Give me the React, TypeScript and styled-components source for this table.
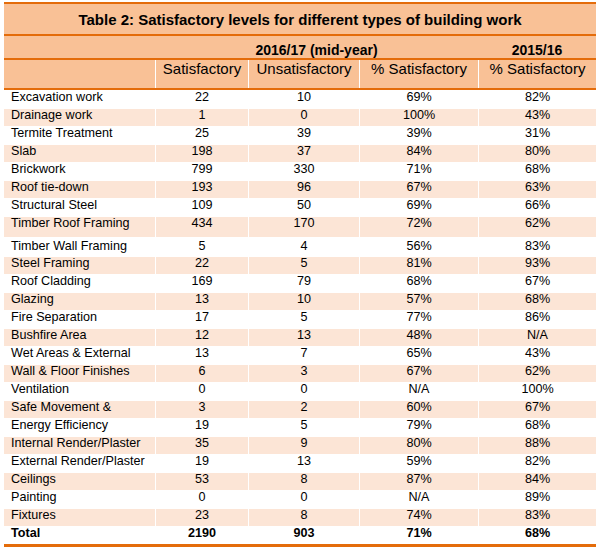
import React from 'react';
import styled, { createGlobalStyle } from 'styled-components';

const ORANGE = '#E46C0A';
const PEACH = '#F9C196';
const STRIPE = '#FCE5D6';
const COLS = '151px 93px 111px 119px 118px';

const GlobalStyle = createGlobalStyle`
  html, body { margin: 0; padding: 0; background: #fff; }
  body { font-family: "Liberation Sans", Arial, sans-serif; color: #000; }
`;

const Page = styled.div`
  padding: 2px 6px 0 4px;
`;

const Table = styled.div`
  width: 592px;
  border-top: 2px solid ${ORANGE};
  border-bottom: 3px solid ${ORANGE};
`;

const TitleRow = styled.div`
  height: 30px;
  background: ${PEACH};
  border-bottom: 2px solid ${ORANGE};
  display: flex;
  align-items: center;
  justify-content: center;
  font-weight: bold;
  font-size: 15px;
`;

const YearRow = styled.div`
  display: grid;
  grid-template-columns: ${COLS};
  height: 22px;
  background: ${PEACH};
  border-bottom: 2px solid ${ORANGE};
  font-weight: bold;
  font-size: 14px;
`;

const YearCell = styled.div<{ $col: number; $span?: number }>`
  grid-column: ${(p) => p.$col} / span ${(p) => p.$span ?? 1};
  align-self: end;
  text-align: center;
`;

const HeaderRow = styled.div`
  display: grid;
  grid-template-columns: ${COLS};
  height: 28px;
  background: ${PEACH};
  border-bottom: 2px solid ${ORANGE};
  font-size: 15px;
`;

const HeadCell = styled.div<{ $first?: boolean }>`
  text-align: center;
  line-height: 17px;
  border-left: ${(p) => (p.$first ? 'none' : '1px solid #fff')};
`;

const Row = styled.div<{ $stripe?: boolean; $h?: number; $pt?: number; $bold?: boolean }>`
  display: grid;
  grid-template-columns: ${COLS};
  box-sizing: content-box;
  border-top: 1px solid #fff;
  height: ${(p) => p.$h ?? 17}px;
  padding-top: ${(p) => p.$pt ?? 0}px;
  background: ${(p) => (p.$stripe ? STRIPE : '#fff')};
  font-size: 12.6px;
  line-height: 13px;
  font-weight: ${(p) => (p.$bold ? 'bold' : 'normal')};
`;

const NameCell = styled.div`
  padding-left: 7px;
  padding-right: 6px;
  overflow: hidden;
  white-space: nowrap;
`;

const NumCell = styled.div`
  text-align: center;
  overflow: hidden;
  border-left: 1px solid #fff;
`;

type Item = {
  name: string;
  v: [string, string, string, string];
  h?: number;
  pt?: number;
};

const rows: Item[] = [
  { name: 'Excavation work', v: ['22', '10', '69%', '82%'] },
  { name: 'Drainage work', v: ['1', '0', '100%', '43%'] },
  { name: 'Termite Treatment', v: ['25', '39', '39%', '31%'] },
  { name: 'Slab', v: ['198', '37', '84%', '80%'] },
  { name: 'Brickwork', v: ['799', '330', '71%', '68%'] },
  { name: 'Roof tie-down', v: ['193', '96', '67%', '63%'] },
  { name: 'Structural Steel', v: ['109', '50', '69%', '66%'] },
  { name: 'Timber Roof Framing', v: ['434', '170', '72%', '62%'], h: 20 },
  { name: 'Timber Wall Framing', v: ['5', '4', '56%', '83%'], h: 16, pt: 2 },
  { name: 'Steel Framing', v: ['22', '5', '81%', '93%'] },
  { name: 'Roof Cladding', v: ['169', '79', '68%', '67%'] },
  { name: 'Glazing', v: ['13', '10', '57%', '68%'] },
  { name: 'Fire Separation', v: ['17', '5', '77%', '86%'] },
  { name: 'Bushfire Area', v: ['12', '13', '48%', 'N/A'] },
  { name: 'Wet Areas & External', v: ['13', '7', '65%', '43%'] },
  { name: 'Wall & Floor Finishes', v: ['6', '3', '67%', '62%'] },
  { name: 'Ventilation', v: ['0', '0', 'N/A', '100%'] },
  { name: 'Safe Movement &', v: ['3', '2', '60%', '67%'] },
  { name: 'Energy Efficiency', v: ['19', '5', '79%', '68%'] },
  { name: 'Internal Render/Plaster', v: ['35', '9', '80%', '88%'] },
  { name: 'External Render/Plaster', v: ['19', '13', '59%', '82%'] },
  { name: 'Ceilings', v: ['53', '8', '87%', '84%'] },
  { name: 'Painting', v: ['0', '0', 'N/A', '89%'] },
  { name: 'Fixtures', v: ['23', '8', '74%', '83%'] },
];

export default function App() {
  return (
    <Page>
      <GlobalStyle />
      <Table>
        <TitleRow>Table 2: Satisfactory levels for different types of building work</TitleRow>
        <YearRow>
          <YearCell $col={2} $span={3}>2016/17 (mid-year)</YearCell>
          <YearCell $col={5}>2015/16</YearCell>
        </YearRow>
        <HeaderRow>
          <HeadCell $first />
          <HeadCell>Satisfactory</HeadCell>
          <HeadCell>Unsatisfactory</HeadCell>
          <HeadCell>% Satisfactory</HeadCell>
          <HeadCell>% Satisfactory</HeadCell>
        </HeaderRow>
        {rows.map((r, i) => (
          <Row key={r.name} $stripe={i % 2 === 1} $h={r.h} $pt={r.pt}>
            <NameCell>{r.name}</NameCell>
            {r.v.map((x, j) => (
              <NumCell key={j}>{x}</NumCell>
            ))}
          </Row>
        ))}
        <Row $bold>
          <NameCell>Total</NameCell>
          <NumCell>2190</NumCell>
          <NumCell>903</NumCell>
          <NumCell>71%</NumCell>
          <NumCell>68%</NumCell>
        </Row>
      </Table>
    </Page>
  );
}
